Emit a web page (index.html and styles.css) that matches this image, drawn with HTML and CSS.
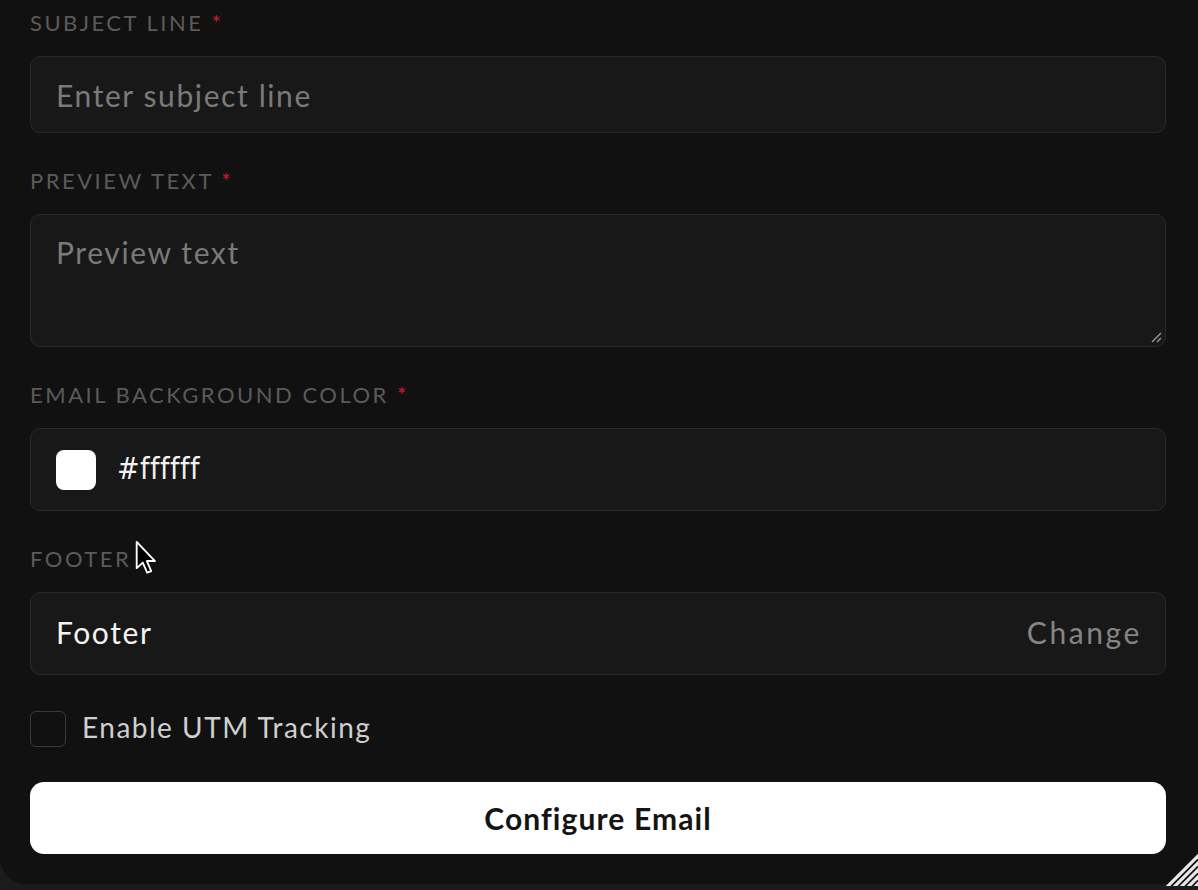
FILE: index.html
```html
<!DOCTYPE html>
<html lang="en">
<head>
<meta charset="utf-8">
<title>Email settings</title>
<link rel="stylesheet" href="styles.css">
</head>
<body>
<div class="panel">
  <form class="form">
    <div class="field">
      <label class="label">Subject line <span class="req">*</span></label>
      <div class="input"><span class="placeholder">Enter subject line</span></div>
    </div>
    <div class="field">
      <label class="label">Preview text <span class="req">*</span></label>
      <div class="input textarea">
        <span class="placeholder">Preview text</span>
        <svg class="grip" width="12" height="12" viewBox="0 0 12 12"><path d="M11 2 L2 11 M11 7 L7 11" stroke="#9a9a9a" stroke-width="1.4" fill="none"/></svg>
      </div>
    </div>
    <div class="field">
      <label class="label">Email background color <span class="req">*</span></label>
      <div class="input color">
        <span class="swatch"></span>
        <span class="hex">#ffffff</span>
      </div>
    </div>
    <div class="field">
      <label class="label">Footer</label>
      <div class="input footer">
        <span class="value">Footer</span>
        <span class="change">Change</span>
      </div>
    </div>
    <label class="check">
      <span class="box"></span>
      <span class="check-text">Enable UTM Tracking</span>
    </label>
    <button type="button" class="submit">Configure Email</button>
  </form>
  <svg class="cursor" width="22" height="36" viewBox="0 0 13 21"><path d="M1 1 L1 16.5 L4.6 13.2 L7.2 19.2 L9.6 18.2 L7 12.3 L11.8 12.3 Z" fill="#000" stroke="#fff" stroke-width="1.1" stroke-linejoin="round"/></svg>
  <svg class="resize" width="34" height="34" viewBox="0 0 34 34">
    <defs><clipPath id="tri"><path d="M34 0 L34 34 L0 34 Z"/></clipPath></defs>
    <g clip-path="url(#tri)" stroke="#e8e8e8" stroke-width="3.2">
      <path d="M-2 40 L40 -2"/>
      <path d="M5 40 L40 5"/>
      <path d="M12 40 L40 12"/>
      <path d="M19 40 L40 19"/>
      <path d="M26 40 L40 26"/>
    </g>
  </svg>
</div>
</body>
</html>
```

FILE: styles.css
```css
* { box-sizing: border-box; }

html, body {
  margin: 0;
  height: 100%;
}

body {
  background: #1b1b1b;
  font-family: "Lato", "Open Sans", sans-serif;
  overflow: hidden;
}

.panel {
  position: relative;
  background: #111111;
  height: 884px;
  border-radius: 0 0 26px 26px;
  padding: 10px 32px 0 30px;
}

.form {
  display: flex;
  flex-direction: column;
  gap: 35px;
}

.field {
  display: flex;
  flex-direction: column;
  gap: 20px;
}

.label {
  font-size: 22px;
  line-height: 26px;
  letter-spacing: 2.5px;
  text-transform: uppercase;
  color: #5b5b5b;
}

.req {
  color: #c81e2d;
  font-size: 22px;
  line-height: 0;
  letter-spacing: 0;
}

.input {
  position: relative;
  display: flex;
  align-items: center;
  height: 77px;
  padding: 0 25px;
  background: #181818;
  border: 1.5px solid #2a2a2a;
  border-radius: 10px;
  font-size: 30px;
  letter-spacing: 1.6px;
}

.placeholder {
  color: #7a7a7a;
}

.textarea {
  height: 133px;
  align-items: flex-start;
  padding-top: 19px;
}

.grip {
  position: absolute;
  right: 3px;
  bottom: 3px;
}

.color {
  height: 83px;
  gap: 21px;
}

.swatch {
  width: 40px;
  height: 40px;
  border-radius: 8px;
  background: #ffffff;
}

.hex {
  font-family: "DejaVu Sans Condensed", "DejaVu Sans", sans-serif;
  font-stretch: condensed;
  font-size: 30px;
  letter-spacing: 0.5px;
  color: #f2f2f2;
  padding-bottom: 3px;
}

.footer {
  height: 83px;
  justify-content: space-between;
}

.value,
.change {
  padding-bottom: 4px;
}

.value {
  color: #f4f4f4;
}

.change {
  color: #858585;
  letter-spacing: 2.6px;
  margin-right: -2px;
}

.check {
  display: flex;
  align-items: center;
  gap: 16px;
  margin-top: 1px;
}

.box {
  width: 36px;
  height: 36px;
  border: 1.5px solid #3a3a3a;
  border-radius: 6px;
}

.check-text {
  font-size: 28px;
  line-height: 28px;
  letter-spacing: 1.5px;
  color: #cfcfcf;
  padding-bottom: 5px;
}

.submit {
  height: 72px;
  border: none;
  border-radius: 14px;
  background: #ffffff;
  color: #141414;
  font-family: inherit;
  font-size: 30px;
  font-weight: 700;
  letter-spacing: 1.1px;
  cursor: pointer;
}

.cursor {
  position: absolute;
  left: 135px;
  top: 540px;
}

.resize {
  position: absolute;
  right: 0;
  bottom: -2px;
}
```
